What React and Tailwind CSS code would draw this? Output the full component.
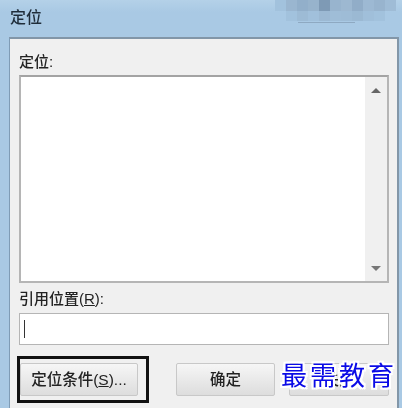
const mosaicTop = ["#a2c2dd","#9ab6d0","#92afca","#97b3cc","#7e9ab5","#98b4ce","#9db8d1","#91adc8","#9db9d3","#98b4ce","#9fbcd6"];
const mosaicBottom = ["#a2c2dd","#9dbbd5","#a1c0db","#9cb9d3","#9fbdd7","#9ebcd6","#9bb9d3","#a0bfda","#a2c2dd"];

function Button({ children, className = "" }) {
  return (
    <div
      className={`flex h-[33px] items-center justify-center rounded-[2px] border border-[#c8c8c8] bg-gradient-to-b from-[#f6f6f6] to-[#dddddd] text-[15.5px] font-medium text-[#222] ${className}`}
    >
      {children}
    </div>
  );
}

export default function App() {
  return (
    <div className="relative h-[408px] w-[402px] overflow-hidden bg-gradient-to-b from-[#b4d1e8] to-[#a9c9e4] to-[12px] font-['Liberation_Sans','Noto_Sans_CJK_SC',sans-serif] blur-[0.4px]">
      {/* title bar */}
      <div className="flex h-[37px] items-center pb-[1px] pl-[10px] text-[16px] font-medium text-[#1f2d3a]">
        定位
      </div>

      {/* dialog body */}
      <div className="ml-[9px] mr-[3px] h-[371px] border-l border-r-2 border-t-2 border-[#8296a8] border-l-[#7f9cb6] bg-[#f0f0f0] pl-[9px] pr-[8px]">
        <div className="flex h-[36px] items-center pt-[10px] text-[15px] font-medium text-[#222]">定位:</div>

        <div className="flex h-[208px] justify-end border-2 border-[#a3a3a3] border-b-[#b5b5b5] border-l-[#b5b5b5] border-r-[#b5b5b5] bg-white">
          <div className="flex w-[22px] flex-col items-center justify-between bg-[#f0f0f0] pb-[10px] pt-[11px]">
            <div className="h-0 w-0 border-x-[5px] border-b-[5px] border-x-transparent border-b-[#666]" />
            <div className="h-0 w-0 border-x-[5px] border-t-[5px] border-x-transparent border-t-[#777]" />
          </div>
        </div>

        <div className="flex h-[30px] items-center pt-[3px] text-[15px] font-medium text-[#222]">
          引用位置(<span className="underline">R</span>):
        </div>

        <div className="flex h-[32px] items-center border border-[#b5b5b5] bg-white pl-[4px]">
          <div className="h-[18px] w-[1px] bg-[#333]" />
        </div>

        <div className="mt-[11px] flex items-start">
          <div className="-ml-[2px] box-border h-[47px] w-[132px] border-[3px] border-[#111] pt-[4px]">
            <Button className="w-[118px]">
              定位条件(<span className="underline">S</span>)...
            </Button>
          </div>
          <Button className="ml-[27px] mt-[7px] w-[99px]">确定</Button>
          <Button className="ml-[14px] mt-[7px] w-[100px]">关闭</Button>
        </div>
      </div>

      {/* mosaic over the top edge */}
      <div className="absolute left-[275px] top-0 flex">
        {mosaicTop.map((c, i) => (
          <div key={i} className="h-[11px] w-[11px]" style={{ backgroundColor: c }} />
        ))}
      </div>
      <div className="absolute left-[286px] top-[11px] flex">
        {mosaicBottom.map((c, i) => (
          <div key={i} className="h-[10px] w-[11px]" style={{ backgroundColor: c }} />
        ))}
      </div>
      <div className="absolute left-[298px] top-[22px] h-[1px] w-[57px] bg-[#8ea9c2]" />

      {/* watermark */}
      <div className="absolute left-[281px] top-[357px] whitespace-nowrap font-['Noto_Sans_CJK_SC',serif] text-[26px] leading-[34px] tracking-[3px] text-[#0a0ae6] [text-shadow:2px_2px_0_#fff,-2px_-2px_0_#fff,2px_-2px_0_#fff,-2px_2px_0_#fff,2px_0_0_#fff,-2px_0_0_#fff,0_2px_0_#fff,0_-2px_0_#fff]">
        最需教育
      </div>
    </div>
  );
}
